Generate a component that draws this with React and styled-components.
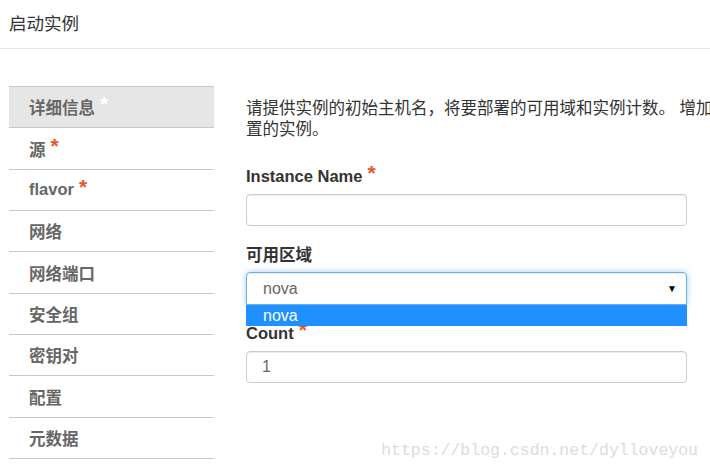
import React from 'react';
import styled, { createGlobalStyle } from 'styled-components';

const GlobalStyle = createGlobalStyle`
    html, body {
        margin: 0;
        padding: 0;
        background: #fff;
    }
    body {
        font-family: "Liberation Sans", "Noto Sans CJK SC", sans-serif;
        color: #333;
    }
`;

const steps = [
    { name: '详细信息', required: true, active: true },
    { name: '源', required: true },
    { name: 'flavor', required: true },
    { name: '网络' },
    { name: '网络端口' },
    { name: '安全组' },
    { name: '密钥对' },
    { name: '配置' },
    { name: '元数据' },
];

const App = () => {
    return (
        <Page>
            <GlobalStyle />
            <Header>
                <Title>启动实例</Title>
            </Header>
            <Body>
                <Nav>
                    {steps.map((s) => (
                        <NavItem key={s.name} $active={s.active}>
                            {s.name}
                            {s.required && <Star $light={s.active}>*</Star>}
                        </NavItem>
                    ))}
                </Nav>
                <Content>
                    <Desc>
                        请提供实例的初始主机名，将要部署的可用域和实例计数。 增加实例数以创建多个具有相同设置的实例。
                    </Desc>
                    <Group>
                        <Label>Instance Name<Star>*</Star></Label>
                        <Input />
                    </Group>
                    <Group>
                        <Label>可用区域</Label>
                        <SelectWrap>
                            <Select>
                                nova
                                <Caret>▼</Caret>
                            </Select>
                            <Options>
                                <Option>nova</Option>
                            </Options>
                        </SelectWrap>
                    </Group>
                    <Group>
                        <Label>Count<Star>*</Star></Label>
                        <Input>1</Input>
                    </Group>
                </Content>
            </Body>
            <Watermark>https://blog.csdn.net/dylloveyou</Watermark>
        </Page>
    );
};

const Page = styled.div`
    position: relative;
    width: 710px;
    height: 469px;
    overflow: hidden;
`;

const Header = styled.div`
    height: 49px;
    border-bottom: 1px solid #e5e5e5;
    display: flex;
    align-items: center;
    padding-left: 9px;
    padding-bottom: 4px;
    box-sizing: border-box;
`;

const Title = styled.h4`
    margin: 0;
    font-size: 17.5px;
    font-weight: normal;
    color: #333;
`;

const Body = styled.div`
    display: flex;
    padding-left: 9px;
`;

const Nav = styled.div`
    flex: 0 0 205px;
    margin-top: 37px;
    border-bottom: 1px solid #c8c8c8;
    align-self: flex-start;
`;

const NavItem = styled.div`
    box-sizing: border-box;
    height: 41.35px;
    border-top: 1px solid #c8c8c8;
    background: ${(p) => (p.$active ? '#e6e6e6' : '#fff')};
    padding-left: 20px;
    display: flex;
    align-items: center;
    font-size: 16.5px;
    font-weight: 600;
    color: #666;
`;

const Star = styled.span`
    color: ${(p) => (p.$light ? '#fff' : '#e95420')};
    font-size: 21px;
    font-weight: bold;
    margin-left: 5px;
    position: relative;
    top: -3px;
`;

const Content = styled.div`
    margin-left: 32px;
    padding-top: 49px;
    width: 441px;
`;

const Desc = styled.p`
    width: 696px;
    margin: 0 0 25px;
    font-size: 16.5px;
    line-height: 21px;
    color: #333;
`;

const Group = styled.div`
    margin-bottom: 17px;
`;

const Label = styled.div`
    display: flex;
    align-items: center;
    height: 22px;
    margin-bottom: 7px;
    font-size: 16.5px;
    font-weight: bold;
    color: #333;
`;

const Input = styled.div`
    box-sizing: border-box;
    height: 32px;
    border: 1px solid #ccc;
    border-radius: 4px;
    box-shadow: inset 0 1px 1px rgba(0, 0, 0, 0.075);
    padding: 0 15px;
    display: flex;
    align-items: center;
    font-size: 16px;
    color: #666;
`;

const SelectWrap = styled.div`
    position: relative;
`;

const Select = styled(Input)`
    height: 33px;
    padding: 0 9px 0 16px;
    border-color: #66afe9;
    border-radius: 4px 4px 0 0;
    box-shadow: inset 0 1px 1px rgba(0, 0, 0, 0.075), 0 0 6px rgba(102, 175, 233, 0.6);
    justify-content: space-between;
`;

const Caret = styled.span`
    font-size: 10px;
    color: #000;
`;

const Options = styled.div`
    position: absolute;
    left: 0;
    right: 0;
    top: 33px;
    z-index: 2;
`;

const Option = styled.div`
    height: 21px;
    background: #1e90ff;
    color: #fff;
    font-size: 16px;
    padding-left: 17px;
    display: flex;
    align-items: center;
`;

const Watermark = styled.div`
    position: absolute;
    right: 12px;
    bottom: 9px;
    font-family: "Liberation Mono", monospace;
    font-size: 16.5px;
    color: #dcdcdc;
`;

export default App;
